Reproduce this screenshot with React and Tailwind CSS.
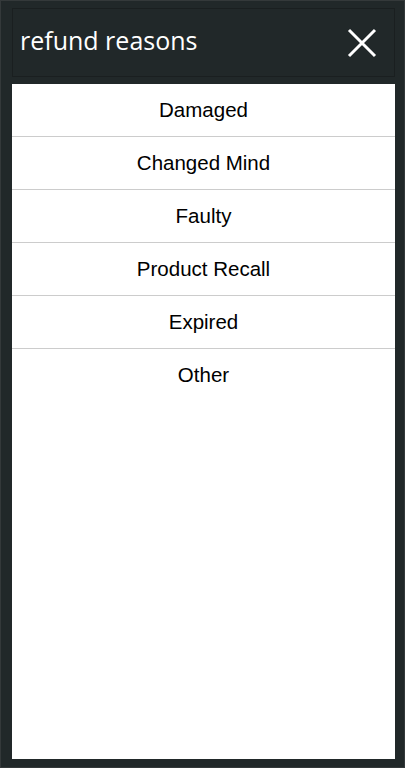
import React from "react";

const reasons = [
  "Damaged",
  "Changed Mind",
  "Faulty",
  "Product Recall",
  "Expired",
  "Other",
];

const App = () => {
  return (
    <div className="w-[405px] h-[768px] bg-[#212829] border border-[#34393a] flex flex-col pl-[11px] pr-[9px] pt-[7px] pb-[8px]">
      {/* HEADER */}
      <div className="h-[69px] border border-[#1a1f20] flex items-center justify-between pl-[7px] pr-[17px] shrink-0">
        <span
          className="text-white text-[25px] leading-none pb-[4px]"
          style={{ fontFamily: '"Open Sans", "Noto Sans", sans-serif' }}
        >
          refund reasons
        </span>
        <button className="w-[30px] h-[30px] flex items-center justify-center">
          <svg width="30" height="30" viewBox="0 0 30 30">
            <path
              d="M2 2 L28 28 M28 2 L2 28"
              stroke="white"
              strokeWidth="3"
              fill="none"
            />
          </svg>
        </button>
      </div>

      {/* LIST */}
      <div className="mt-[7px] flex-1 bg-white">
        {reasons.map((r, i) => (
          <div
            key={r}
            className={`h-[53px] flex items-center justify-center text-[20.5px] text-black ${
              i < reasons.length - 1 ? "border-b border-[#cccccc]" : ""
            }`}
            style={{ fontFamily: '"Liberation Sans", Arial, sans-serif' }}
          >
            {r}
          </div>
        ))}
      </div>
    </div>
  );
};

export default App;
